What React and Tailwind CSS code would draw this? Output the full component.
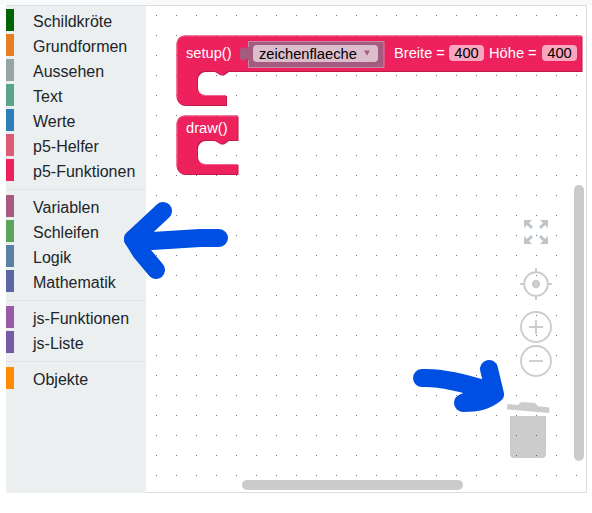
import React from "react";

const groups = [
  [
    ["Schildkröte", "bg-[#006400]"],
    ["Grundformen", "bg-[#e67e22]"],
    ["Aussehen", "bg-[#95a5a6]"],
    ["Text", "bg-[#5ba58c]"],
    ["Werte", "bg-[#2e7fb8]"],
    ["p5-Helfer", "bg-[#dc5b75]"],
    ["p5-Funktionen", "bg-[#ed225d]"],
  ],
  [
    ["Variablen", "bg-[#a55b80]"],
    ["Schleifen", "bg-[#5ba55b]"],
    ["Logik", "bg-[#5b80a5]"],
    ["Mathematik", "bg-[#5b67a5]"],
  ],
  [
    ["js-Funktionen", "bg-[#995ba5]"],
    ["js-Liste", "bg-[#745ba5]"],
  ],
  [["Objekte", "bg-[#ff8c00]"]],
];

function Toolbox() {
  return (
    <nav className="w-[140px] shrink-0 bg-[#ebeff0] pt-[3px] text-[16px] text-[#20252a]">
      {groups.map((items, g) => (
        <div
          key={g}
          className={g > 0 ? "mt-[8px] border-t border-[#dfe3e5] pt-[5px]" : ""}
        >
          {items.map(([name, color]) => (
            <div key={name} className="mb-[3px] flex h-[22px] items-center">
              <span className={"mr-[19px] h-full w-2 shrink-0 " + color} />
              <span className="pt-[3px] leading-[22px] whitespace-nowrap">{name}</span>
            </div>
          ))}
        </div>
      ))}
    </nav>
  );
}

function BlockShape({ d, light, w, h }) {
  return (
    <svg className="absolute top-0 left-0" width={w} height={h}>
      <path d={d} fill="#be1b4a" transform="translate(1,1)" />
      <path d={d} fill="#ed225d" />
      <path d={light} fill="none" stroke="#f2648e" strokeWidth="1" />
    </svg>
  );
}

function NumberField({ children }) {
  return (
    <span className="h-4 w-[35px] rounded-[4px] bg-[#f8a7be] text-center leading-4 text-black">
      {children}
    </span>
  );
}

function SetupBlock() {
  return (
    <div className="absolute top-[29px] left-[30px] h-[72px] w-[408px]">
      <BlockShape
        w={408}
        h={72}
        d="M0.5 8.5A8 8 0 0 1 8.5 0.5H405.5V36H52L47 39.5H44L38 36H29A8 8 0 0 0 21 44V52A8 8 0 0 0 29 60H50V70H8.5A8 8 0 0 1 0.5 62Z"
        light="M1 63V8.5A8 8 0 0 1 8.5 1H405M23.5 58A8 8 0 0 0 29 60.5H50"
      />
      <svg className="absolute top-[5px] left-[63px]" width="147" height="30">
        <path d="M9 1H145V27H9V20C9 9.5 1 28 1 13.5S9 16.5 9 6Z" fill="#a55b80" />
        <path d="M2.5 7.5C0.5 9 0.5 18 2.5 20.5H5L9 18V9L5 7.5Z" fill="#a55b80" />
        <path d="M9.5 27V20M9.5 7V1.5H145" fill="none" stroke="#c08ca6" />
        <path d="M145 1V27.5H9" fill="none" stroke="#c58aa8" />
      </svg>
      <div className="relative flex h-[36px] items-center pl-[10px] text-[14.67px] whitespace-nowrap text-white">
        <span className="w-[67px]">setup()</span>
        <span className="flex h-[17px] w-[125px] items-center rounded-[4px] bg-[#dbbdcc] pl-[6px] text-black">
          <span className="w-[105px] pt-px">zeichenflaeche</span>
          <svg width="6" height="6">
            <path d="M0 0.5H6L3 5.5Z" fill="#a55b80" />
          </svg>
        </span>
        <span className="ml-4 w-[55px]">Breite =</span>
        <NumberField>400</NumberField>
        <span className="ml-[5px] w-[53px]">Höhe =</span>
        <NumberField>400</NumberField>
      </div>
    </div>
  );
}

function DrawBlock() {
  return (
    <div className="absolute top-[109px] left-[30px] h-[61px] w-[64px]">
      <BlockShape
        w={64}
        h={61}
        d="M0.5 8.5A8 8 0 0 1 8.5 0.5H61.5V25H52L47 28.5H44L38 25H29A8 8 0 0 0 21 33V41A8 8 0 0 0 29 49H61.5V59H8.5A8 8 0 0 1 0.5 51Z"
        light="M1 52V8.5A8 8 0 0 1 8.5 1H61.5M23.5 47A8 8 0 0 0 29 49.5H61.5"
      />
      <div className="relative pt-[2px] pl-[10px] text-[14.67px] leading-[22px] text-white">draw()</div>
    </div>
  );
}

function Controls() {
  return (
    <div className="absolute top-[214px] left-[360px] flex w-[60px] flex-col items-center">
      <svg width="24" height="24" fill="#bcc6ca" stroke="#bcc6ca">
        <g id="corner">
          <path d="M0 0H8L0 8Z" stroke="none" />
          <path d="M3 3L8 8" strokeWidth="3" />
        </g>
        <use href="#corner" transform="translate(24,0) scale(-1,1)" />
        <use href="#corner" transform="translate(0,24) scale(1,-1)" />
        <use href="#corner" transform="translate(24,24) scale(-1,-1)" />
      </svg>
      <svg className="mt-[23px]" width="34" height="34" fill="none" stroke="#cbcbcb" strokeWidth="2">
        <circle cx="17" cy="17" r="11.8" />
        <circle cx="17" cy="17" r="4.2" fill="#cbcbcb" stroke="none" />
        <path d="M17 1V5M17 29V33M1 17H5M29 17H33" />
      </svg>
      <svg className="mt-[9px]" width="34" height="34" fill="none" stroke="#cbcbcb" strokeWidth="1.8">
        <circle cx="17" cy="17" r="15" />
        <path d="M10 17H24M17 10V24" />
      </svg>
      <svg width="34" height="34" fill="none" stroke="#cbcbcb" strokeWidth="1.8">
        <circle cx="17" cy="17" r="15" />
        <path d="M10 17H24" />
      </svg>
    </div>
  );
}

function Trash() {
  return (
    <svg className="absolute top-[395px] left-[360px]" width="45" height="59" fill="#000" fillOpacity="0.2">
      <path d="M1.5 3L12 4L15 1L29 2L32 5.3L43.5 6.5L43 12L1 8.5Z" />
      <path d="M4 15H40V53A4 4 0 0 1 36 57H8A4 4 0 0 1 4 53Z" />
    </svg>
  );
}

function Workspace() {
  return (
    <main className="relative flex-1 border-r border-b border-[#dddddd] bg-white">
      <svg className="absolute inset-0 h-full w-full">
        <defs>
          <pattern id="grid" x="10" y="9" width="20" height="20" patternUnits="userSpaceOnUse">
            <rect width="1" height="1" fill="#777" />
          </pattern>
        </defs>
        <rect width="100%" height="100%" fill="url(#grid)" />
      </svg>
      <SetupBlock />
      <DrawBlock />
      <Controls />
      <Trash />
      <div className="absolute top-[179px] left-[428px] h-[276px] w-[10px] rounded-full bg-[#cbcbcb]" />
      <div className="absolute top-[474px] left-[96px] h-[10px] w-[221px] rounded-full bg-[#cbcbcb]" />
    </main>
  );
}

export default function App() {
  return (
    <div className="relative flex h-[513px] w-[592px] flex-col overflow-hidden bg-white font-['Liberation_Sans',Arial,sans-serif]">
      <div className="h-[5px] bg-[#f8f9fb]" />
      <div className="ml-[6px] flex h-[488px] w-[581px] border-t border-[#dddddd]">
        <Toolbox />
        <Workspace />
      </div>
      <svg
        className="absolute inset-0"
        width="592"
        height="513"
        fill="none"
        stroke="#004fe3"
        strokeWidth="18"
        strokeLinecap="round"
        strokeLinejoin="round"
      >
        <path d="M219 238L200 238L152 241L133 239L163 211" />
        <path d="M133 239L141 252L156 270M141 241L141 252" />
        <path d="M422 378C441 377 464 383 490 391M489 369L495 394C486 401 478 403 463 403L490 391" />
      </svg>
    </div>
  );
}
